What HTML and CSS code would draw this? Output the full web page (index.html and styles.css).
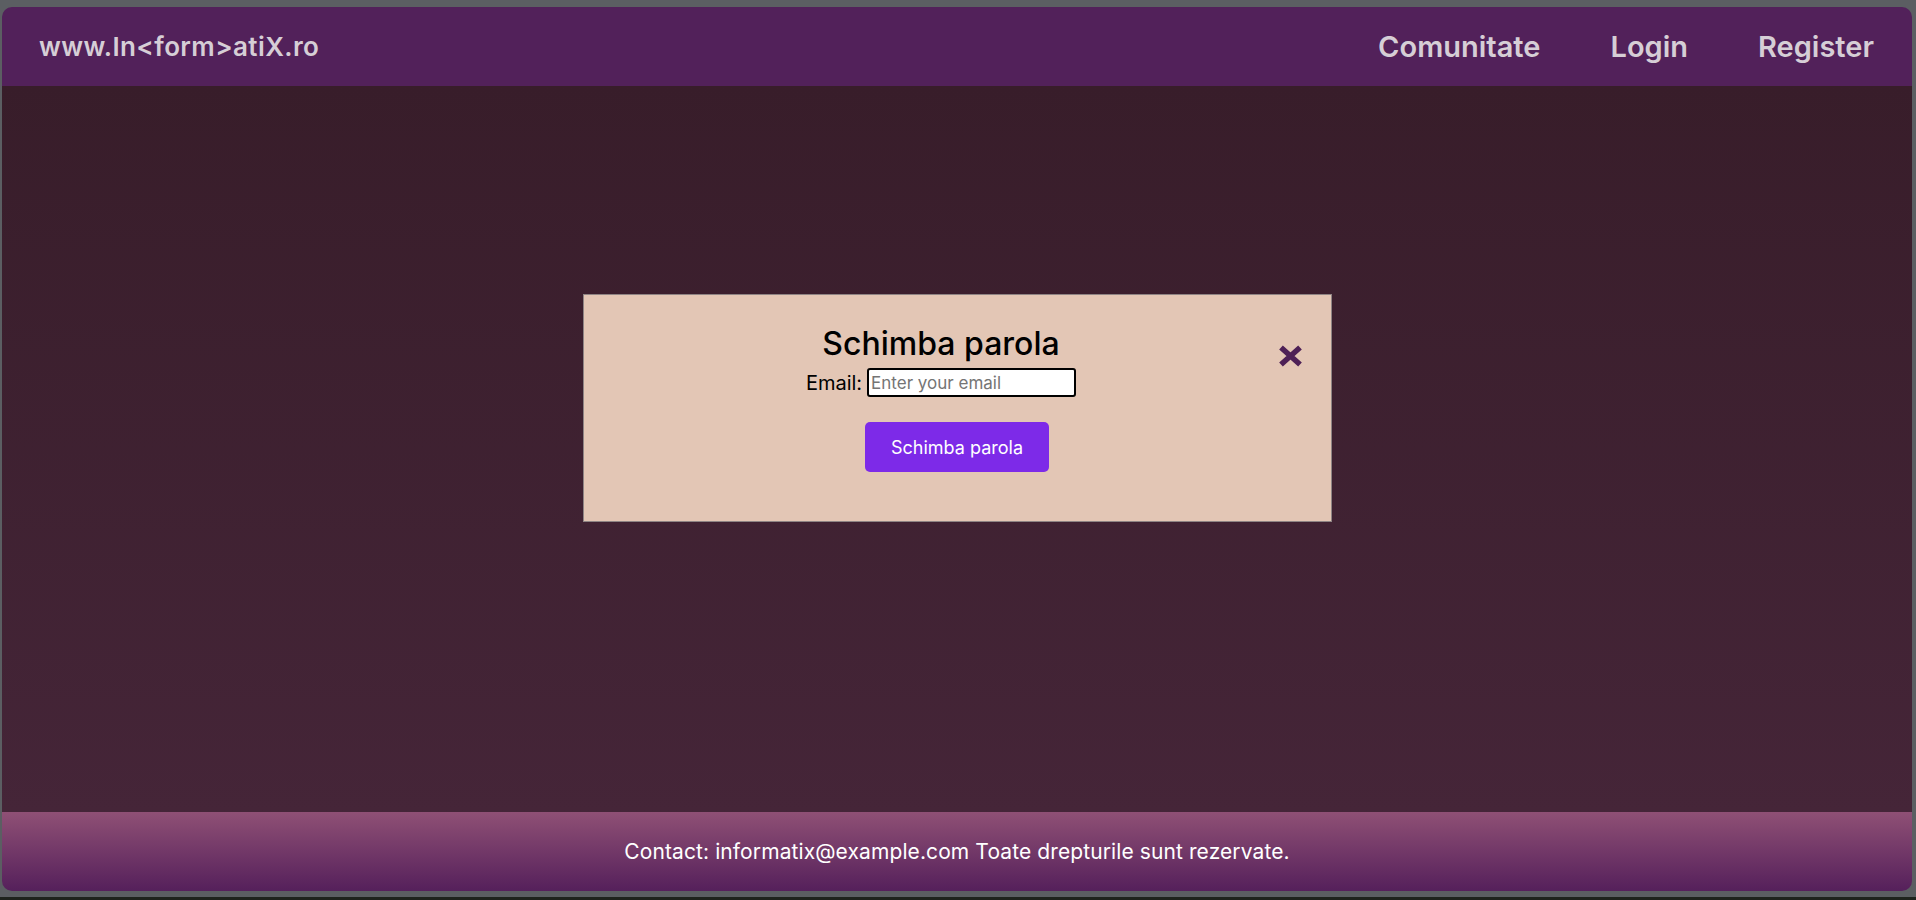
FILE: index.html
```html
<!DOCTYPE html>
<html lang="ro">
<head>
<meta charset="utf-8">
<title>www.In&lt;form&gt;atiX.ro</title>
<link rel="stylesheet" href="styles.css">
</head>
<body>
<div class="page">
  <header class="topbar">
    <a class="logo" href="#">www.In&lt;form&gt;atiX.ro</a>
    <nav class="nav">
      <a href="#">Comunitate</a>
      <a href="#">Login</a>
      <a href="#">Register</a>
    </nav>
  </header>
  <main class="main">
    <div class="modal">
      <div class="modal-body">
        <h2 class="modal-title">Schimba parola</h2>
        <div class="field">
          <label for="email">Email:</label>
          <input id="email" type="email" placeholder="Enter your email">
        </div>
      </div>
      <div class="actions">
        <button class="btn" type="button">Schimba parola</button>
      </div>
      <button class="close" type="button" aria-label="Inchide">
        <svg width="25" height="22" viewBox="0 0 25 22"><path d="M3 2.5 L22 19.5 M22 2.5 L3 19.5" stroke="#4e2056" stroke-width="5.5" stroke-linecap="butt" fill="none"/></svg>
      </button>
    </div>
  </main>
  <footer class="footer">
    <p>Contact: informatix@example.com Toate drepturile sunt rezervate.</p>
  </footer>
</div>
<div class="strip"></div>
</body>
</html>
```
FILE: styles.css
```css
html, body {
  margin: 0;
  padding: 0;
}
body {
  background: #5b5e62;
  font-family: Inter, "Open Sans", sans-serif;
  height: 900px;
  overflow: hidden;
}
.page {
  margin: 7px 4px 6px 2px;
  height: 884px;
  border-radius: 10px;
  overflow: hidden;
  display: flex;
  flex-direction: column;
}
.topbar {
  height: 79px;
  flex: none;
  background: #52215a;
  display: flex;
  align-items: center;
  justify-content: space-between;
  padding: 0 38px 0 37px;
}
.logo {
  color: #d6ced6;
  text-decoration: none;
  font-size: 26px;
  font-weight: 600;
  letter-spacing: 0.4px;
}
.nav {
  display: flex;
  gap: 70px;
}
.nav a {
  color: #d6ced6;
  text-decoration: none;
  font-size: 29px;
  font-weight: 600;
}
.main {
  flex: 1;
  background: linear-gradient(#381d2a, #452538);
  display: flex;
  justify-content: center;
  align-items: flex-start;
}
.modal {
  position: relative;
  margin-top: 208px;
  width: 749px;
  height: 228px;
  box-sizing: border-box;
  background: #e3c6b5;
  border: 1px solid #8e8484;
  display: flex;
  flex-direction: column;
}
.modal-body {
  display: flex;
  flex-direction: column;
  align-items: center;
  padding: 29px 32px 0 0;
}
.modal-title {
  margin: 0;
  font-size: 32px;
  font-weight: 500;
  color: #000;
  line-height: 39px;
}
.field {
  margin-top: 5px;
  display: flex;
  align-items: center;
  gap: 5px;
}
.field label {
  font-size: 20px;
  color: #000;
}
.field input {
  width: 209px;
  height: 29px;
  box-sizing: border-box;
  border: 2px solid #000;
  border-radius: 3px;
  padding: 0 2px;
  background: #fff;
  font-family: inherit;
  font-size: 17px;
  outline: none;
}
.field input::placeholder {
  color: #757575;
}
.close {
  position: absolute;
  top: 50px;
  right: 28px;
  width: 25px;
  height: 22px;
  padding: 0;
  border: 0;
  background: none;
  cursor: pointer;
}
.close svg {
  display: block;
}
.actions {
  display: flex;
  justify-content: center;
  margin-top: 25px;
}
.btn {
  width: 184px;
  height: 50px;
  border: 0;
  border-radius: 5px;
  background: #7d2ae8;
  color: #fff;
  font-family: inherit;
  font-size: 18px;
  cursor: pointer;
}
.footer {
  height: 79px;
  flex: none;
  background: linear-gradient(#8f5075, #55205b);
  display: flex;
  align-items: center;
  justify-content: center;
}
.footer p {
  margin: 0;
  color: #fff;
  font-size: 21px;
  letter-spacing: 0.1px;
}
.strip {
  height: 3px;
  background: #1e231d;
}
```
